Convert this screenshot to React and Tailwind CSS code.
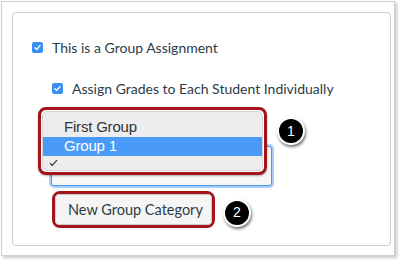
import React from "react";

function Check({ className }) {
  return (
    <span className={"flex items-center justify-center w-[11px] h-[11px] rounded-[2px] bg-[#3a8ef0] " + (className || "")}>
      <svg width="9" height="9" viewBox="0 0 9 9">
        <path d="M2 4.7 L3.8 6.4 L7 2.6" stroke="white" strokeWidth="1.4" fill="none" strokeLinecap="round" strokeLinejoin="round" />
      </svg>
    </span>
  );
}

function Badge({ n }) {
  return (
    <div className="flex items-center justify-center w-[28px] h-[28px] rounded-full bg-black border-2 border-white shadow-[1px_2px_3px_rgba(0,0,0,0.55)] text-white text-[14px] [font-family:'Liberation_Sans',Arial,sans-serif]">
      {n}
    </div>
  );
}

export default function App() {
  return (
    <div className="w-[401px] h-[261px] bg-white pl-[1px] pt-[1px] [font-family:Lato,'Liberation_Sans',sans-serif]">
      <div className="w-[394px] h-[255px] border border-[#cfcfcf] shadow-[2px_2px_3px_rgba(0,0,0,0.22)] pl-[10px] pt-[10px]">
        <div className="w-[379px] h-[234px] border border-[#c7cdd1] rounded-[4px] pl-[19px] pt-[24px] flex flex-col items-start text-[14px] text-[#2d3b45]">
          <div className="flex items-center h-[20px]">
            <Check />
            <span className="ml-[9px]">This is a Group Assignment</span>
          </div>
          <div className="flex items-center h-[20px] mt-[21px] ml-[20px]">
            <Check />
            <span className="ml-[9px]">Assign Grades to Each Student Individually</span>
          </div>
          <div className="relative mt-[48px] ml-[19px] w-[221px] h-[40px] rounded-[3px] border border-[#4d97ec] bg-[#f6f6f6] shadow-[0_0_0_2px_rgba(130,185,245,0.7)]">
            <div className="absolute left-[-14px] top-[-40px] w-[229px] h-[68px] rounded-[8px] border-[3px] border-[#a3141c] bg-white p-[1px] shadow-[0_1px_2px_rgba(0,0,0,0.3)]">
              <div className="w-full h-full rounded-[5px] border border-[#d4d4d4] bg-[#ededed] pt-[5px] flex flex-col [font-family:'Liberation_Sans',Arial,sans-serif] text-[15px] tracking-[-0.2px] text-[#333]">
                <div className="h-[20px] pl-[21px] flex items-center">First Group</div>
                <div className="h-[19px] pl-[21px] flex items-center bg-[#4a9bf7] text-white">Group 1</div>
                <div className="h-[13px] pl-[6px] flex items-center">
                  <svg width="9" height="8" viewBox="0 0 9 8">
                    <path d="M1 4.2 L3.3 6.4 L8 1.2" stroke="#333" strokeWidth="1.2" fill="none" />
                  </svg>
                </div>
              </div>
            </div>
            <div className="absolute left-[225px] top-[-30px]">
              <Badge n="1" />
            </div>
          </div>
          <div className="flex items-center mt-[5px] ml-[20px]">
            <div className="rounded-[8px] border-[3px] border-[#a3141c] w-[163px] h-[37px] bg-white">
              <div className="w-full h-full rounded-[4px] border border-[#c7cdd1] bg-[#f5f5f5] flex items-center pl-[12px] text-[14.5px] text-[#2d3b45]">
                New Group Category
              </div>
            </div>
            <div className="ml-[8px] mt-[6px]">
              <Badge n="2" />
            </div>
          </div>
        </div>
      </div>
    </div>
  );
}
